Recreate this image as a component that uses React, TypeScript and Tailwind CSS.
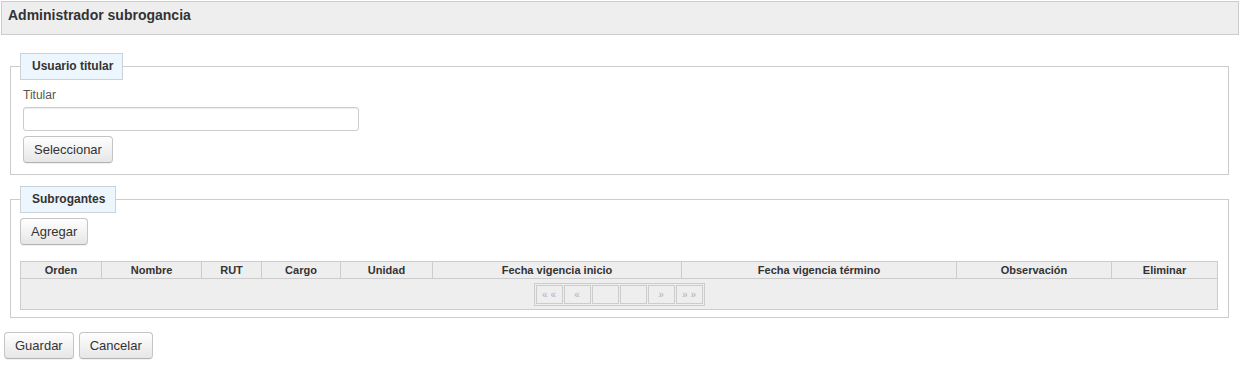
import React from "react";

const btn =
  "h-[27px] px-[10px] rounded-[4px] border border-[#c5c5c5] border-b-[#b3b3b3] bg-gradient-to-b from-white to-[#e6e6e6] text-[13px] leading-[25px] text-[#333] shadow-[0_1px_1px_rgba(0,0,0,0.06)]";

const legendCls =
  "h-[27px] border border-[#c9d3dc] bg-[#eef6fd] text-[12px] font-bold leading-[25px] text-[#333]";

const cols: [string, string][] = [
  ["Orden", "w-[81px]"],
  ["Nombre", "w-[100px]"],
  ["RUT", "w-[60px]"],
  ["Cargo", "w-[79px]"],
  ["Unidad", "w-[92px]"],
  ["Fecha vigencia inicio", "w-[249px]"],
  ["Fecha vigencia término", "w-[275px]"],
  ["Observación", "w-[155px]"],
  ["Eliminar", "w-[105px]"],
];

const pager = ["« «", "«", "", "", "»", "» »"];

export default function App() {
  return (
    <div className="font-['Liberation_Sans',Arial,sans-serif] bg-white w-[1253px] h-[372px] text-[#333]">
      <div className="ml-px mt-px w-[1238px] h-[34px] border border-[#cccccc] bg-[#eeeeee] pl-[6px] pt-[5px]">
        <h1 className="text-[14px] font-bold leading-[16px] text-[#333]">Administrador subrogancia</h1>
      </div>

      <fieldset className="ml-[10px] mt-[18px] w-[1219px] border border-[#cccccc]">
        <legend className={`${legendCls} ml-[9px] pl-[11px] pr-[9px]`}>Usuario titular</legend>
        <div className="pl-[12px] pt-[6px] pb-[11px]">
          <label className="block text-[12px] leading-[18px] text-[#555]">Titular</label>
          <input
            type="text"
            className="mt-[3px] block w-[336px] h-[24px] rounded-[3px] border border-[#cccccc] bg-white shadow-[inset_0_1px_1px_rgba(0,0,0,0.075)] outline-none"
          />
          <button className={`${btn} mt-[5px] block`}>Seleccionar</button>
        </div>
      </fieldset>

      <fieldset className="ml-[10px] mt-[11px] w-[1219px] border border-[#cccccc]">
        <legend className={`${legendCls} ml-[9px] pl-[11px] pr-[10px]`}>Subrogantes</legend>
        <div className="pl-[9px] pr-[10px] pt-[5px] pb-[7px]">
          <button className={`${btn} block`}>Agregar</button>
          <div className="mt-[16px] w-[1198px] border border-[#cccccc] bg-[#eeeeee]">
            <div className="flex h-[17px] border-b border-[#cccccc]">
              {cols.map(([t, w], i) => (
                <div
                  key={t}
                  className={`${w} ${i < cols.length - 1 ? "border-r border-[#cccccc]" : ""} text-center text-[11px] font-bold leading-[16px] text-[#333]`}
                >
                  {t}
                </div>
              ))}
            </div>
            <div className="flex h-[30px] items-center justify-center">
              <div className="flex gap-px border border-[#cccccc] p-px bg-[#eeeeee]">
                {pager.map((g, i) => (
                  <div
                    key={i}
                    className="w-[27px] h-[19px] border border-[#cccccc] text-center text-[10px] leading-[17px] text-[#a9b3c4]"
                  >
                    {g}
                  </div>
                ))}
              </div>
            </div>
          </div>
        </div>
      </fieldset>

      <div className="ml-[4px] mt-[14px] flex gap-[5px]">
        <button className={btn}>Guardar</button>
        <button className={btn}>Cancelar</button>
      </div>
    </div>
  );
}
